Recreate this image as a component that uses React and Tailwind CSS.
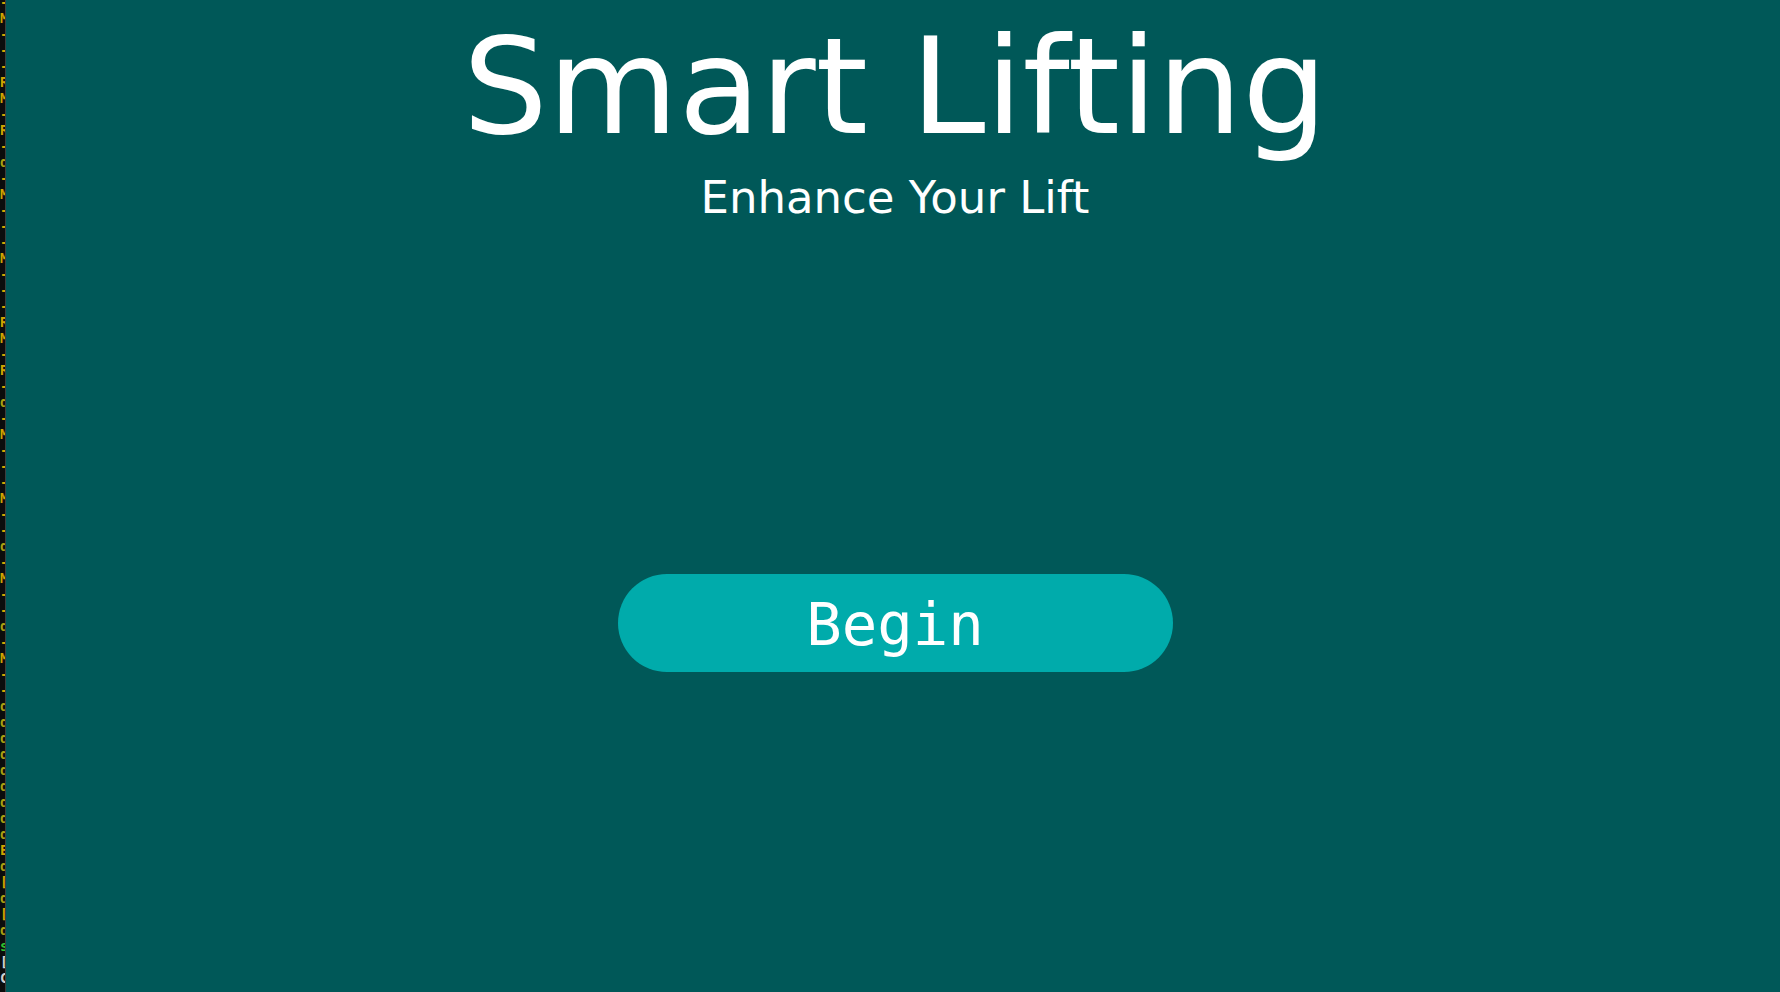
import React from 'react';

// first glyph of each terminal line peeking in at the left edge
const termLines = [
  ['-', 'y'], ['M', 'y'], ['-', 'y'], ['-', 'y'], ['-', 'y'], ['R', 'y'], ['M', 'y'], ['-', 'y'],
  ['R', 'y'], ['-', 'y'], ['d', 'o'], ['-', 'y'], ['M', 'y'], ['-', 'y'], ['-', 'y'], ['-', 'y'],
  ['M', 'y'], ['-', 'y'], ['-', 'y'], ['-', 'y'], ['R', 'y'], ['M', 'y'], ['-', 'y'], ['R', 'y'],
  ['-', 'y'], ['d', 'o'], ['-', 'y'], ['M', 'y'], ['-', 'y'], ['-', 'y'], ['-', 'y'], ['M', 'y'],
  ['-', 'y'], ['-', 'y'], ['d', 'o'], ['-', 'y'], ['M', 'y'], ['-', 'y'], ['-', 'y'], ['d', 'o'],
  ['-', 'y'], ['M', 'y'], ['-', 'y'], ['-', 'y'], ['d', 'o'], ['d', 'o'], ['d', 'o'], ['d', 'o'],
  ['d', 'o'], ['d', 'o'], ['d', 'o'], ['d', 'o'], ['d', 'o'], ['E', 'y'], ['d', 'o'], ['[', 'y'],
  ['d', 'o'], ['[', 'y'], ['d', 'o'], ['s', 'g'], ['[', 'w'], ['C', 'w'],
];

const glyphColor = {
  y: 'text-[#d2a400]',
  o: 'text-[#aaa010]',
  g: 'text-[#2fc22f]',
  w: 'text-[#d0d0d0]',
};

const TerminalEdge = () => (
  <div className="w-[5px] shrink-0 overflow-hidden bg-[#0c0c0c] border-r border-[#3c3c3c] box-content">
    <div className="-mt-[6px] font-['DejaVu_Sans_Mono',monospace] text-[14px] leading-[16px] font-bold whitespace-pre">
      {termLines.map(([ch, c], i) => (
        <div key={i} className={glyphColor[c]}>{ch}</div>
      ))}
    </div>
  </div>
);

export default function App() {
  return (
    <div className="flex h-[992px] w-full overflow-hidden bg-[#005858]">
      <TerminalEdge />

      <main className="flex flex-1 flex-col items-center pl-[4px] text-white font-['DejaVu_Sans',sans-serif]">
        <h1 className="pt-[9px] text-[134px] leading-[156px] font-normal whitespace-nowrap">
          Smart Lifting
        </h1>
        <p className="mt-[7px] text-[45px] leading-[52px] whitespace-nowrap">
          Enhance Your Lift
        </p>

        <button className="mt-[350px] flex h-[98px] w-[555px] items-center justify-center rounded-full bg-[#00abab] pt-[2px] font-['DejaVu_Sans_Mono',monospace] text-[59px] leading-none text-white">
          Begin
        </button>
      </main>
    </div>
  );
}
